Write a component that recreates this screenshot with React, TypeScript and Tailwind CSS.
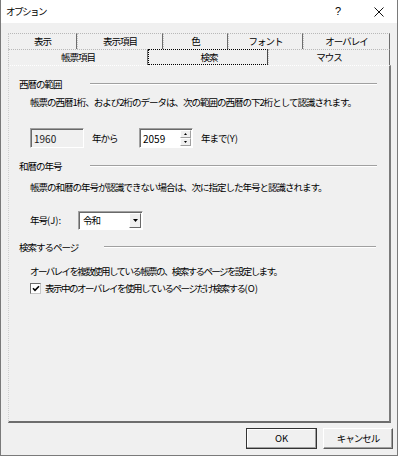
import React from "react";

const FONT = "font-['Noto_Sans_CJK_JP','Noto_Sans_CJK_SC',sans-serif] text-[9.5px] tracking-[-1px] text-black";

function Tab({ label, w, sel }: { label: string; w: string; sel?: boolean }) {
  if (sel) {
    return (
      <div className={`${w} h-[16px] flex items-center justify-center border border-dotted border-black [border-right-style:solid] border-r-[#4a4a4a] bg-[#f0f0f0]`}>
        <span className="pl-[2px]">{label}</span>
      </div>
    );
  }
  return (
    <div className={`${w} h-[16px] flex items-center justify-center border-t border-l border-r border-dotted border-t-[#b8b8b8] border-l-[#c4c4c4] [border-right-style:solid] border-r-[#6d6d6d]`}>
      <span>{label}</span>
    </div>
  );
}

function Header({ label, w, pr }: { label: string; w: string; pr: string }) {
  return (
    <div className={`h-[14px] flex items-center pl-[10px] ${pr}`}>
      <div className={w}>{label}</div>
      <div className="flex-1 flex flex-col">
        <div className="h-px bg-[#a0a0a0]" />
        <div className="h-px bg-white" />
      </div>
    </div>
  );
}

function SpinArrow({ up }: { up?: boolean }) {
  return (
    <svg width="3" height="2" viewBox="0 0 3 2">
      {up ? <path d="M1.5 0 L3 2 L0 2 Z" fill="#000" /> : <path d="M0 0 L3 0 L1.5 2 Z" fill="#000" />}
    </svg>
  );
}

export default function App() {
  return (
    <div className={`w-[398px] h-[456px] bg-[#f0f0f0] border-l border-r border-b border-[#7a7a7a] flex flex-col ${FONT}`}>
      {/* title bar */}
      <div className="h-[23px] bg-white flex items-center shrink-0">
        <div className="pl-[5px] flex-1 tracking-[-1.5px]">オプション</div>
        <div className="w-[12px] text-[11px] tracking-normal font-['Liberation_Sans',sans-serif] mr-[27px] leading-none">?</div>
        <div className="mr-[13px]">
          <svg width="10" height="10" viewBox="0 0 10 10">
            <path d="M0.5 0.5 L9.5 9.5 M9.5 0.5 L0.5 9.5" stroke="#111" strokeWidth="1" />
          </svg>
        </div>
      </div>

      {/* tabs */}
      <div className="ml-[7px] mt-[10px] flex flex-col">
        <div className="flex">
          <Tab label="表示" w="w-[69px]" />
          <Tab label="表示項目" w="w-[86px]" />
          <Tab label="色" w="w-[65px]" />
          <Tab label="フォント" w="w-[75px]" />
          <Tab label="オーバレイ" w="w-[87px]" />
        </div>
        <div className="flex">
          <Tab label="帳票項目" w="w-[140px]" />
          <Tab label="検索" w="w-[120px]" sel />
          <Tab label="マウス" w="w-[122px]" />
        </div>
      </div>

      {/* panel */}
      <div className="ml-[7px] w-[383px] h-[358px] border-t border-l border-dotted border-t-white border-l-[#d0d0d0] border-r-2 border-b-2 [border-right-style:solid] [border-bottom-style:solid] border-r-[#7a7a7a] border-b-[#6d6d6d] flex flex-col">
        <div className="mt-[11px]">
          <Header label="西暦の範囲" w="w-[71px]" pr="pr-[12px]" />
        </div>
        <div className="mt-[4px] h-[14px] flex items-center pl-[21px]">
          帳票の西暦1桁、および2桁のデータは、次の範囲の西暦の下2桁として認識されます。
        </div>
        <div className="mt-[19px] h-[20px] flex items-center pl-[21px]">
          <div className="w-[54px] h-[20px] border border-t-[#a0a0a0] border-l-[#a0a0a0] border-b-white border-r-white shadow-[inset_1px_1px_0_#696969] bg-[#f0f0f0] flex items-center pl-[3px] text-[#222] tracking-normal text-[10px]">
            1960
          </div>
          <div className="w-[55px] pl-[8px]">年から</div>
          <div className="w-[54px] h-[20px] border border-t-[#a0a0a0] border-l-[#a0a0a0] border-b-white border-r-white shadow-[inset_1px_1px_0_#696969] bg-white flex items-stretch pl-[3px] pt-[1px] pr-px pb-px">
            <div className="flex-1 flex items-center tracking-normal text-[10px]">2059</div>
            <div className="w-[11px] flex flex-col">
              <div className="flex-1 bg-[#f0f0f0] border border-t-white border-l-white border-r-[#a0a0a0] border-b-[#a0a0a0] flex items-center justify-center">
                <SpinArrow up />
              </div>
              <div className="flex-1 bg-[#f0f0f0] border border-t-white border-l-white border-r-[#a0a0a0] border-b-[#a0a0a0] flex items-center justify-center">
                <SpinArrow />
              </div>
            </div>
          </div>
          <div className="pl-[8px]">
            年まで<span className="tracking-normal">(Y)</span>
          </div>
        </div>

        <div className="mt-[11px]">
          <Header label="和暦の年号" w="w-[71px]" pr="pr-[12px]" />
        </div>
        <div className="mt-[7px] h-[14px] flex items-center pl-[21px]">
          帳票の和暦の年号が認識できない場合は、次に指定した年号と認識されます。
        </div>
        <div className="mt-[17px] h-[19px] flex items-center pl-[21px]">
          <div className="w-[48px]">
            年号<span className="tracking-normal">(J):</span>
          </div>
          <div className="w-[65px] h-[19px] border border-t-[#a0a0a0] border-l-[#a0a0a0] border-b-white border-r-white shadow-[inset_1px_1px_0_#696969] bg-white flex items-stretch pl-[4px] pt-[1px] pr-px pb-px">
            <div className="flex-1 flex items-center">令和</div>
            <div className="w-[12px] bg-[#f0f0f0] border border-t-white border-l-white border-r-[#696969] border-b-[#696969] flex items-center justify-center">
              <svg width="5" height="3" viewBox="0 0 5 3">
                <path d="M0 0 L5 0 L2.5 3 Z" fill="#000" />
              </svg>
            </div>
          </div>
        </div>

        <div className="mt-[10px]">
          <Header label="検索するページ" w="w-[85px]" pr="pr-[13px]" />
        </div>
        <div className="mt-[10px] h-[14px] flex items-center pl-[21px] tracking-[-1.6px]">
          オーバレイを複数使用している帳票の、検索するページを設定します。
        </div>
        <div className="mt-[4px] h-[13px] flex items-center pl-[21px]">
          <div className="w-[11px] h-[11px] border border-t-[#6d6d6d] border-l-[#6d6d6d] border-b-[#c8c8c8] border-r-[#c8c8c8] bg-white flex items-center justify-center">
            <svg width="8" height="7" viewBox="0 0 8 7">
              <path d="M1 3.2 L3 5.3 L7 1.2" stroke="#000" strokeWidth="1.6" fill="none" />
            </svg>
          </div>
          <div className="pl-[4px] tracking-[-1.5px]">
            表示中のオーバレイを使用しているページだけ検索する<span className="tracking-normal">(O)</span>
          </div>
        </div>
      </div>

      {/* buttons */}
      <div className="mt-[5px] flex justify-end gap-[6px] pr-[4px]">
        <div className="w-[71px] h-[21px] border border-[#333] shadow-[inset_-1px_-1px_0_#a0a0a0,inset_1px_1px_0_#fff] flex items-center justify-center tracking-normal">
          OK
        </div>
        <div className="w-[70px] h-[21px] border border-t-white border-l-white border-r-[#5a5a5a] border-b-[#5a5a5a] shadow-[inset_-1px_-1px_0_#a0a0a0] flex items-center justify-center">
          キャンセル
        </div>
      </div>
    </div>
  );
}
